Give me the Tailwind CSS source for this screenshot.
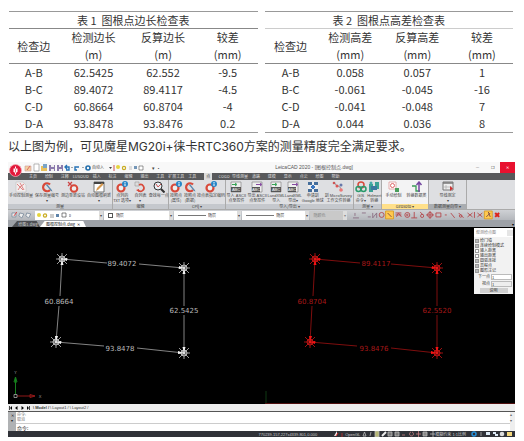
<!DOCTYPE html>
<html lang="zh-CN">
<head>
<meta charset="utf-8">
<meta name="viewport" content="width=device-width, initial-scale=1">
<title>测量精度检查</title>
<script src="https://cdn.jsdelivr.net/npm/@tailwindcss/browser@4"></script>
</head>
<body class="bg-white text-[#333] font-['Noto_Sans_CJK_SC',sans-serif]">
<svg class="hidden" aria-hidden="true">
  <symbol id="ring" viewBox="0 0 12 12"><circle cx="6" cy="7" r="3.5" fill="#eee" stroke="#d8493a" stroke-width="2.2"/></symbol>
  <symbol id="survey" viewBox="0 0 12 12"><path d="M1 1h7l3 3v7H1z" fill="#f2eeee" stroke="#bbb" stroke-width=".5"/><path d="M2 3l3 3-2 3M5 2l4 7M9 3L5 6l3 3" fill="none" stroke="#d77" stroke-width=".9"/></symbol>
  <symbol id="ringpen" viewBox="0 0 12 12"><path d="M9 3.5A4 4 0 1 0 9 9" fill="none" stroke="#d8493a" stroke-width="2.2"/><path d="M5 4l5 6 1.500.500-.7-1.600L6 3z" fill="#5687ad"/></symbol>
  <symbol id="ringx" viewBox="0 0 12 12"><circle cx="7" cy="7.500" r="3.300" fill="#eee" stroke="#d8493a" stroke-width="2"/><path d="M1 1l4 4M5 1L1 5" stroke="#c44" stroke-width="1.200"/></symbol>
  <symbol id="ringinfo" viewBox="0 0 12 12"><circle cx="5" cy="7" r="3.500" fill="#eee" stroke="#d8493a" stroke-width="2.200"/><circle cx="9" cy="3" r="3" fill="#2786c8"/><path d="M9 1v1M9 2.500v2.500" stroke="#fff"/></symbol>
  <symbol id="page" viewBox="0 0 12 12"><path d="M1 1h10v10H1z" fill="#fff" stroke="#555" stroke-width=".8"/><path d="M1 1h10v2H1z" fill="#444"/><path d="M3 10l1-3 5-5 1.500 1.500-5 5z" fill="#d79a50"/></symbol>
  <symbol id="zoomi" viewBox="0 0 12 12"><circle cx="5" cy="5" r="4" fill="#e9f1f5" stroke="#333"/><path d="M8 8l3.500 3.500" stroke="#333" stroke-width="2"/><path d="M3 3l2 3 3-3" fill="none" stroke="#c55"/></symbol>
  <symbol id="cycle" viewBox="0 0 12 12"><path d="M1 1h4v4H1z" fill="#ddd" stroke="#999" stroke-width=".6"/><path d="M5 4a3.300 3.300 0 1 1-1 5" fill="none" stroke="#d8493a" stroke-width="1.700"/><path d="M2 9l3-1v3z" fill="#d8493a"/></symbol>
  <symbol id="abcg" viewBox="0 0 12 12"><path d="M1 1h10v10H1z" fill="#eee" stroke="#777" stroke-width=".6"/><path d="M1 6h10v5H1z" fill="#555"/><path d="M2 3.500h4M5 2l2 1.500L5 5" stroke="#36a455" fill="none"/><text x="6" y="10" text-anchor="middle" font-size="4" fill="#fff" font-family="Liberation Sans">ABC</text></symbol>
  <symbol id="abcp" viewBox="0 0 12 12"><path d="M1 1h10v10H1z" fill="#eee" stroke="#777" stroke-width=".6"/><path d="M1 6h8v5H1z" fill="#555"/><path d="M5 3.500h5M9 2l2 1.500L9 5" stroke="#8549a0" fill="none"/><text x="5" y="10" text-anchor="middle" font-size="4" fill="#fff" font-family="Liberation Sans">ABC</text></symbol>
  <symbol id="earth" viewBox="0 0 12 12"><path d="M1 1h10v10H1z" fill="#eee"/><path d="M1 1h4v3H1zM7 1h4v3H7zM1 8h4v3H1zM7 8h4v3H7z" fill="#456d9b"/><path d="M4 6h4M6 4v4" stroke="#3975c0" stroke-width="2"/></symbol>
  <symbol id="dots" viewBox="0 0 12 12"><path d="M2 1l2 3 4 2 2 4" fill="none" stroke="#999"/><circle cx="2" cy="2" r="1.300" fill="#c55"/><circle cx="5" cy="5" r="1.500" fill="#d55"/><circle cx="9" cy="4" r="1.500" fill="#67a"/><circle cx="9" cy="9" r="1.800" fill="#e77"/></symbol>
  <symbol id="gis" viewBox="0 0 12 12"><circle cx="6" cy="4" r="3" fill="none" stroke="#d8493a" stroke-width="1.500"/><circle cx="3.500" cy="8" r="2.500" fill="none" stroke="#2a9a6b" stroke-width="1.500"/><circle cx="8.500" cy="8" r="2.500" fill="none" stroke="#2a9a6b" stroke-width="1.500"/></symbol>
  <symbol id="net" viewBox="0 0 12 12"><path d="M1 3h4v8H1zM7 1h4v7H7z" fill="#3ba195"/><path d="M3 5h6v4H3z" fill="#3c78a0"/><circle cx="3" cy="2" r="1.500" fill="#4aa"/></symbol>
  <symbol id="geo" viewBox="0 0 12 12"><path d="M1 1h7v7H1z" fill="#fff" stroke="#d99" stroke-width=".8"/><circle cx="4.500" cy="4.500" r="2" fill="none" stroke="#d66"/><path d="M7 7h4v4H7z" fill="#4a9e5c"/></symbol>
  <symbol id="updown" viewBox="0 0 12 12"><path d="M1 5h4v5h4" fill="none" stroke="#3a9b55" stroke-width="1.300"/><path d="M8 11V2M5.500 4L8 1l2.500 3" fill="none" stroke="#7548a0" stroke-width="1.500"/></symbol>
  <symbol id="tab" viewBox="0 0 12 12"><path d="M1 1h10v8H1z" fill="#eee" stroke="#777"/><path d="M1 2h10" stroke="#777" stroke-width="1.500"/><path d="M4 4v5M1 6h10" stroke="#aaa" stroke-width=".7"/><path d="M8 5l3 2.500L8 10z" fill="#c33"/></symbol>
  <symbol id="star" viewBox="-7 -7 14 14"><path d="M-5-5L5 5M5-5L-5 5M0-6V6M-6 0H6" stroke="currentColor" stroke-width=".7"/><circle r="3" fill="none" stroke="currentColor" stroke-width=".8"/><circle r="1.400" fill="currentColor"/></symbol>
</svg>

<main class="flex flex-col pl-2 pr-2">
  <section class="grid grid-cols-2 gap-x-[7px] pt-[11px] pl-px pr-[3px] text-[11px] leading-[17px] text-[#333] text-center">
    <table class="w-full table-fixed border-collapse border-b border-[#999]">
      <caption class="border-t border-[#999] leading-4">表 1&nbsp; 图根点边长检查表</caption>
      <colgroup><col class="w-[20%]"><col class="w-[28%]"><col class="w-[28%]"><col class="w-[24%]"></colgroup>
      <thead class="border-y border-[#888]"><tr>
        <th class="font-normal">检查边</th><th class="font-normal">检测边长<br>(m)</th><th class="font-normal">反算边长<br>(m)</th><th class="font-normal">较差<br>(mm)</th></tr></thead>
      <tbody>
        <tr><td>A-B</td><td>62.5425</td><td>62.552</td><td>-9.5</td></tr>
        <tr><td>B-C</td><td>89.4072</td><td>89.4117</td><td>-4.5</td></tr>
        <tr><td>C-D</td><td>60.8664</td><td>60.8704</td><td>-4</td></tr>
        <tr><td>D-A</td><td>93.8478</td><td>93.8476</td><td>0.2</td></tr>
      </tbody>
    </table>
    <table class="w-full table-fixed border-collapse border-b border-[#999]">
      <caption class="border-t border-[#999] leading-4">表 2&nbsp; 图根点高差检查表</caption>
      <colgroup><col class="w-[21%]"><col class="w-[27%]"><col class="w-[27%]"><col class="w-[25%]"></colgroup>
      <thead class="border-t border-b border-t-[#ccc] border-b-[#888]"><tr>
        <th class="font-normal">检查边</th><th class="font-normal">检测高差<br>(mm)</th><th class="font-normal">反算高差<br>(mm)</th><th class="font-normal">较差<br>(mm)</th></tr></thead>
      <tbody>
        <tr><td>A-B</td><td>0.058</td><td>0.057</td><td>1</td></tr>
        <tr><td>B-C</td><td>-0.061</td><td>-0.045</td><td>-16</td></tr>
        <tr><td>C-D</td><td>-0.041</td><td>-0.048</td><td>7</td></tr>
        <tr><td>D-A</td><td>0.044</td><td>0.036</td><td>8</td></tr>
      </tbody>
    </table>
  </section>

  <p class="pt-[5px] pb-[6px] text-[12px] leading-[18px] text-[#333] font-['Inter','Noto_Sans_CJK_SC',sans-serif]">以上图为例，可见魔星MG20i+徕卡RTC360方案的测量精度完全满足要求。</p>

  <section class="relative mr-px flex flex-col bg-[#c4c7cc] text-[4px] leading-[5px] text-[#444]">
    <button aria-label="应用菜单" class="absolute left-px top-[2px] z-10 size-[13px]">
      <svg viewBox="0 0 13 13" class="size-full"><circle cx="6.500" cy="6.500" r="6" fill="#e2193b" stroke="#f4a5ae" stroke-width=".8"/><path d="M6.500 2.500v8" stroke="#fff" stroke-width="1"/><path d="M4.500 4.500h4v3l-2 2-2-2z" fill="#fff"/><path d="M6.500 4.500v4" stroke="#e2193b" stroke-width=".6"/></svg>
    </button>
    <header class="flex h-[11px] items-center bg-[#f8f8f8] pl-4">
      <svg viewBox="0 0 68 10" class="h-[10px] w-[68px] shrink-0" aria-hidden="true">
        <path d="M1 3h6v5H1z" fill="#f3d2a0" stroke="#c99" stroke-width=".6"/><path d="M3 7l3-4" stroke="#d66"/>
        <path d="M10 1h5v7h-5z" fill="#fff" stroke="#999" stroke-width=".7"/>
        <path d="M17 3h6v5h-6z" fill="#e9c15c"/><path d="M19 1h4v4h-4z" fill="#79a4c7"/>
        <path d="M25 2h6v6h-6zM33 2h6v6h-6z" fill="#8b7aac"/><path d="M27 2h3v2h-3zM35 2h2v2h-2zM27 6h3v2h-3zM35 6h3v2h-3z" fill="#eee"/>
        <path d="M42 7h3V4h-4m2-2-2 2 2 2M53 7h-2V4h4" fill="none" stroke="#2672b5" stroke-width="1.400"/>
        <path d="M47 4h2l-1 1zM58 4h2l-1 1z" fill="#555"/>
        <circle cx="64" cy="5" r="2" fill="none" stroke="#246fac" stroke-width="1.600"/>
      </svg>
      <span class="w-4 shrink-0 whitespace-nowrap">自动入</span>
      <svg viewBox="0 0 36 10" class="h-[10px] w-9 shrink-0" aria-hidden="true"><path d="M1 4h3l-1.500 2z" fill="#444"/><path d="M6 2v6" stroke="#c55"/><circle cx="10" cy="4" r="2" fill="#e5d53c"/><circle cx="16" cy="5" r="1.600" fill="none" stroke="#c9ac22" stroke-width="1.200"/><path d="M21 3h3v4h-3z" fill="#ddd"/><path d="M26 3h3v3h-3z" fill="#7496b7"/><path d="M31 3h4v4h-4z" fill="#fff" stroke="#555" stroke-width=".6"/></svg>
      <span class="ml-2 whitespace-nowrap text-[5px]">▾ ·</span>
      <h1 class="ml-auto mr-[117px] whitespace-nowrap text-[5px] text-[#555] font-['Liberation_Sans','Noto_Sans_CJK_SC',sans-serif]">LeicaCAD 2020 - [图根控制点.dwg]</h1>
      <div class="flex h-full items-stretch">
        <button class="w-[15px]" aria-label="最小化">—</button><button class="w-[15px]" aria-label="还原">❐</button><button class="w-[15px] bg-[#e8112f] text-white" aria-label="关闭">✕</button>
      </div>
    </header>

    <nav class="flex h-[7px] items-center bg-[#58595b] pl-[17px] text-[#ddd]">
      <div class="grid w-[65%] grid-cols-20 items-center text-center whitespace-nowrap">
        <a href="#">主页</a><a href="#">绘制</a><a href="#">注释</a><a href="#">LUSOUD</a><a href="#">插入</a><a href="#">标注</a><a href="#">编辑</a><a href="#">输出</a><a href="#">工具</a><a href="#">扩展工具</a><a href="#">工具</a><a href="#" class="mx-1 bg-[#ddd] leading-[7px] text-[#333]">点</a><a href="#">COGO</a><a href="#">导线测量</a><a href="#">道路</a><a href="#">建模</a><a href="#">显示</a><a href="#">点云</a><a href="#">绘图</a><a href="#">帮助</a>
      </div>
    </nav>

    <div class="grid h-[29px] grid-cols-[105fr_56fr_57fr_128fr_28fr_47fr_38fr_48fr] bg-[#dedfe2] text-center whitespace-nowrap">
      <div class="flex flex-col justify-between border-r border-[#aaa]">
        <div class="grid grid-cols-4 pt-px">
          <button class="flex flex-col items-center"><svg class="size-3"><use href="#survey"/></svg>手动控制测量</button>
          <button class="flex flex-col items-center"><svg class="size-3"><use href="#ringpen"/></svg>保存测量编号<br>▾</button>
          <button class="flex flex-col items-center"><svg class="size-3"><use href="#ringx"/></svg>测边重新设站</button>
          <button class="flex flex-col items-center"><svg class="size-3"><use href="#page"/></svg>自动图根刷新<br>▾</button>
        </div>
        <span class="bg-[#c5c8cd]">测量</span>
      </div>
      <div class="flex flex-col justify-between border-r border-[#aaa]">
        <div class="grid grid-cols-3 pt-px">
          <button class="flex flex-col items-center"><svg class="size-3"><use href="#ringinfo"/></svg>点列的<br>TXT 选项▾</button>
          <button class="flex flex-col items-center"><svg class="size-3"><use href="#cycle"/></svg>自列表<br>▾</button>
          <button class="flex flex-col items-center"><svg class="size-3"><use href="#zoomi"/></svg>查找每一点</button>
        </div>
        <span class="bg-[#c5c8cd]">编辑</span>
      </div>
      <div class="flex flex-col justify-between border-r border-[#aaa]">
        <div class="grid grid-cols-[1fr_1fr_2fr] pt-px">
          <button class="flex flex-col items-center"><svg class="size-3"><use href="#ringinfo"/></svg>按照点<br>(属性)</button>
          <button class="flex flex-col items-center"><svg class="size-3"><use href="#ringpen"/></svg>按照点<br>(数据)</button>
          <button class="flex flex-col items-center"><svg class="size-3"><use href="#ringinfo"/></svg>按点表指定编码</button>
        </div>
        <span class="bg-[#c5c8cd]">CPij ▾</span>
      </div>
      <div class="flex flex-col justify-between border-r border-[#aaa]">
        <div class="grid grid-cols-[5fr_5fr_4fr_4fr_5fr_7fr] pt-px font-['Liberation_Sans','Noto_Sans_CJK_SC',sans-serif]">
          <button class="flex flex-col items-center"><svg class="size-3"><use href="#abcg"/></svg>导入 ASCII<br>点至控件</button>
          <button class="flex flex-col items-center"><svg class="size-3"><use href="#abcp"/></svg>导出 ASCII<br>点至控件</button>
          <button class="flex flex-col items-center"><svg class="size-3"><use href="#abcg"/></svg>LandXML<br>导入</button>
          <button class="flex flex-col items-center"><svg class="size-3"><use href="#abcp"/></svg>LandXML<br>导出▾</button>
          <button class="flex flex-col items-center"><svg class="size-3"><use href="#earth"/></svg>申请到<br>Google 地球</button>
          <button class="flex flex-col items-center"><svg class="size-3"><use href="#dots"/></svg>到 MicroSurvey<br>工作文件转换</button>
        </div>
        <span class="bg-[#c5c8cd]">导入/导出 ▾</span>
      </div>
      <div class="flex flex-col justify-between border-r border-[#aaa]">
        <div class="grid grid-cols-2 pt-px font-['Liberation_Sans','Noto_Sans_CJK_SC',sans-serif]">
          <button class="flex flex-col items-center"><svg class="size-3"><use href="#gis"/></svg>GIS<br>命令▾</button>
          <button class="flex flex-col items-center"><svg class="size-3"><use href="#net"/></svg>Helmert<br>转换</button>
        </div>
        <span class="bg-[#c5c8cd]">测量 ▾</span>
      </div>
      <div class="flex flex-col justify-between border-r border-[#aaa] bg-[#f3f3f4]">
        <div class="grid grid-cols-2 pt-px">
          <button class="flex flex-col items-center"><svg class="size-3"><use href="#geo"/></svg>手动绘制</button>
          <button class="flex flex-col items-center"><svg class="size-3"><use href="#updown"/></svg>转换数据类</button>
        </div>
        <span class="bg-[#ffe08a]">Geosoto ▾</span>
      </div>
      <div class="flex flex-col justify-between border-r border-[#aaa]">
        <button class="flex flex-col items-center pt-px"><svg class="size-3"><use href="#tab"/></svg>导线测定<br>▾</button>
        <span class="bg-[#aaadb1]">数据测量向导 ▾</span>
      </div>
    </div>

    <div class="grid h-[11px] grid-cols-[26fr_69fr_70fr_68fr_68fr_37fr_169fr] items-center gap-x-px border-t border-[#aaa] bg-gradient-to-b from-[#cfd1d5] to-[#b4b7bc]">
      <svg viewBox="0 0 26 10" class="w-full" aria-hidden="true"><path d="M4 3h4v4H4zM12 3l4 1-2 4-3-2zM19 3l4 1-2 4-3-2z" fill="#eee" stroke="#789" stroke-width=".8"/><path d="M6 6l3-4" stroke="#d44"/></svg>
      <label class="relative flex h-[9px] items-center bg-white">
        <svg viewBox="0 0 34 9" class="absolute left-0 h-[9px]" aria-hidden="true"><circle cx="4" cy="4" r="2" fill="#e5d53c"/><circle cx="10" cy="4.500" r="1.600" fill="none" stroke="#c9ac22" stroke-width="1.300"/><path d="M15 3h4v4h-4z" fill="#ccc"/><path d="M21 3h3v3h-3z" fill="#5d83aa"/><path d="M27 2h4v4h-4z" fill="#fff" stroke="#333" stroke-width=".6"/></svg>
        <select aria-label="图层" class="h-full w-full appearance-none pl-[34px]"><option>0</option></select><span class="pointer-events-none absolute right-0 bg-[#ddd] px-px leading-[9px]">▾</span>
      </label>
      <label class="relative flex h-[9px] items-center bg-white"><span class="absolute left-1 size-[5px] border border-[#555]"></span>
        <select aria-label="颜色" class="h-full w-full appearance-none pl-3"><option>随层</option></select><span class="pointer-events-none absolute right-0 bg-[#ddd] px-px leading-[9px]">▾</span>
      </label>
      <label class="relative flex h-[9px] items-center bg-white"><span class="absolute left-1 h-px w-[28px] bg-[#777]"></span>
        <select aria-label="线型" class="h-full w-full appearance-none pl-[34px]"><option>随层</option></select><span class="pointer-events-none absolute right-0 bg-[#ddd] px-px leading-[9px]">▾</span>
      </label>
      <label class="relative flex h-[9px] items-center bg-white"><span class="absolute left-1 h-px w-[28px] bg-[#777]"></span>
        <select aria-label="线宽" class="h-full w-full appearance-none pl-[34px]"><option>随层</option></select><span class="pointer-events-none absolute right-0 bg-[#ddd] px-px leading-[9px]">▾</span>
      </label>
      <label class="relative flex h-[9px] items-center bg-[#c9c9c9] text-[#888]">
        <select aria-label="打印样式" disabled class="h-full w-full appearance-none pl-[3px]"><option>随颜色</option></select><span class="pointer-events-none absolute right-0 bg-[#ddd] px-px leading-[9px]">▾</span>
      </label>
      <svg viewBox="0 0 169 10" class="w-full" aria-hidden="true" fill="none" stroke="#b5474c" stroke-width=".9">
        <path d="M5 8h6M7 3v3M14 3h4M20 7h3M25 3v5l4-5v5" stroke="#8b6d83"/><circle cx="34" cy="5" r="2.500"/><path d="M38 1h8v8h-8z" fill="#ffc94f" stroke="#d89c25"/><path d="M40 3l4 4" stroke="#744"/><path d="M48 3h6M49 7l2-4 3 4M48 5h6"/><circle cx="60" cy="5" r="2.500"/><circle cx="60" cy="5" r=".8"/><path d="M64 8h6M67 2v6M73 2l3 3"/><circle cx="75" cy="6" r="1.600"/><circle cx="83" cy="5" r="2.500"/><path d="M83 1v8M79 5h8M89 3h5v4h-5z"/><path d="M98 5h2"/><path d="M104 3l4 5M112 3l5 5" /><circle cx="114" cy="6" r="1.300"/><path d="M121 3l5 4M121 7l5-4M128 2v6M131 3l5 4M131 7l5-4"/><path d="M138 1h8v8h-8z" fill="#ffc94f" stroke="#d89c25"/><path d="M140 7l4-4m0 4-2-5" stroke="#744"/><path d="M149 3l4 4m0-4-4 4" stroke="#dc231b" stroke-width="2"/>
      </svg>
    </div>

    <div class="flex h-[7px] items-end bg-[#9da1a7] pl-1">
      <button class="h-[6px] w-7 bg-[#4d4f53] pl-1 text-[#ccc] [clip-path:polygon(18%_0,88%_0,100%_100%,0_100%)]">绘图1.dwg</button>
      <button class="h-[6px] w-[46px] whitespace-nowrap bg-white text-[#222] [clip-path:polygon(10%_0,94%_0,100%_100%,0_100%)]">图根控制点.dwg &nbsp;✕</button>
      <span class="ml-auto pr-px text-black">▾</span>
    </div>

    <div class="relative bg-black">
      <svg viewBox="0 0 507 177" class="block w-full font-['DejaVu_Sans',sans-serif]" font-size="7" text-anchor="middle" role="img" aria-label="检测与反算四边形">
        <g stroke-width=".7" stroke="#bbb"><path d="M54 32L99 36M131 37L176 41M176 41V79M176 88V126M48 115L96 119M129 121L176 126M54 32L52 69M51 79L48 115" fill="none"/></g>
        <g fill="#fff"><path d="M54 32l5-1v3zM176 41l-5-2v3zM54 32l-1.500 6h3zM176 41l-1.500 6h3zM176 126l-1.500-6h3zM176 126l-6-2v3zM48 115l5-1v3zM48 115l-1-6h3z"/></g>
        <g color="#ddd"><use href="#star" x="47" y="25" width="14" height="14"/><use href="#star" x="169" y="34" width="14" height="14"/><use href="#star" x="169" y="119" width="14" height="14"/><use href="#star" x="41" y="108" width="14" height="14"/></g>
        <g fill="#bbb"><text x="114" y="39">89.4072</text><text x="51" y="77">60.8664</text><text x="176" y="86">62.5425</text><text x="112" y="124">93.8478</text></g>
        <g stroke-width=".7" stroke="#b51414"><path d="M307 32L352 36M383 37L429 41M429 41V79M429 88V126M302 115L349 119M383 121L429 126M307 32L305 69M304 79L302 115" fill="none"/></g>
        <g fill="#f11"><path d="M307 32l5-1v3zM429 41l-5-2v3zM307 32l-1.500 6h3zM429 41l-1.500 6h3zM429 126l-1.500-6h3zM429 126l-6-2v3zM302 115l5-1v3zM302 115l-1-6h3z"/></g>
        <g color="#e01818"><use href="#star" x="300" y="25" width="14" height="14"/><use href="#star" x="422" y="34" width="14" height="14"/><use href="#star" x="422" y="119" width="14" height="14"/><use href="#star" x="295" y="108" width="14" height="14"/></g>
        <g fill="#a81818"><text x="368" y="39">89.4117</text><text x="304" y="77">60.8704</text><text x="429" y="86">62.5520</text><text x="366" y="124">93.8476</text></g>
        <path d="M7.500 167V151M6 155l1.500-5 1.500 5z" stroke="#16801d" fill="none"/><path d="M9 169h18M22 167.500l5 1.500-5 1.500z" stroke="#901919" fill="none"/><path d="M6 167.500h3v3H6z" stroke="#bbb" stroke-width=".7" fill="none"/>
        <g fill="#999" font-size="4"><text x="7.500" y="147">Y</text><text x="32" y="171">X</text></g>
        <path d="M258 176V164" stroke="#15501a" stroke-width=".7"/><path d="M257 176.500H507" stroke="#741717" stroke-width=".7"/>
      </svg>
      <form class="absolute right-[2px] top-px flex w-[39px] flex-col bg-[#f2f2f2] pb-px text-[#333]">
        <div class="flex h-[9px] items-center bg-white pl-[2px] text-[#888]">观测绘点图<span class="ml-auto h-[6px] w-[6px] bg-[#e5e5e5]"></span></div>
        <div class="flex flex-col pl-px pt-px *:flex *:items-center *:gap-px">
          <label><input type="checkbox" checked class="size-1 appearance-none border border-[#999] bg-white checked:bg-[#bbb]">绘门墙</label>
          <label><input type="checkbox" checked class="size-1 appearance-none border border-[#999] bg-white checked:bg-[#bbb]">连续绘制模式</label>
          <label><input type="checkbox" class="size-1 appearance-none border border-[#999] bg-white">输入距离</label>
          <label><input type="checkbox" class="size-1 appearance-none border border-[#999] bg-white">输出距离</label>
          <label><input type="checkbox" checked class="size-1 appearance-none border border-[#999] bg-white checked:bg-[#bbb]">圆弧连接</label>
          <label><input type="checkbox" checked class="size-1 appearance-none border border-[#999] bg-white checked:bg-[#bbb]">高程点</label>
          <label><input type="checkbox" checked class="size-1 appearance-none border border-[#999] bg-white checked:bg-[#bbb]">图形注记</label>
        </div>
        <label class="flex h-[7px] items-center justify-end gap-px pr-px">下一点<input value="1" class="h-[6px] w-[21px] border border-[#bbb] bg-white"></label>
        <label class="flex h-[7px] items-center justify-end gap-px pr-px">视点<input value="1" class="h-[6px] w-[21px] border border-[#bbb] bg-[#eee]"></label>
        <button type="button" class="mx-auto mt-px h-[5px] w-7 bg-[#d0d0d0]">说明</button>
      </form>
    </div>

    <div class="flex h-[7px] items-center gap-[3px] bg-[#eee] pl-px text-[#333]">
      <button aria-label="首个"><svg viewBox="0 0 3 4" class="h-1 w-[3px]"><path d="M0 0h.7v4H0zM3 0v4L1 2z"/></svg></button><button aria-label="上一个"><svg viewBox="0 0 3 4" class="h-1 w-[3px]"><path d="M2.500 0v4L0 2z"/></svg></button><button aria-label="下一个"><svg viewBox="0 0 3 4" class="h-1 w-[3px]"><path d="M.5 0v4L3 2z"/></svg></button><button aria-label="末个"><svg viewBox="0 0 3 4" class="h-1 w-[3px]"><path d="M2.300 0H3v4h-.7zM0 0v4l2-2z"/></svg></button>
      <div class="flex gap-px font-['Liberation_Sans',sans-serif] text-[4px]"><button class="font-bold">\ Model /</button><button>\ Layout1 /</button><button>\ Layout2 /</button></div>
    </div>
    <div class="flex h-5 border-t border-[#555] bg-white text-[5px]">
      <div class="flex w-2 flex-col items-center justify-start bg-[#b0b2b4] pt-px text-[4px] text-[#222]"><span>✕</span><span>▾</span></div>
      <div class="flex flex-1 flex-col">
        <div class="flex-1 border-b border-[#ccc] pl-px text-[4px] text-[#777]">命令:<br>取消</div>
        <label class="flex h-[7px] items-center pl-px text-[#222]">命令:<input aria-label="命令" class="min-w-0 flex-1 outline-none"></label>
      </div>
      <div class="flex w-[5px] flex-col justify-between bg-[#eee] pb-2 text-[4px] leading-[5px] text-[#666]"><span>▴</span><span>▾</span></div>
    </div>
    <footer class="flex h-[6px] items-center bg-[#303238] text-[#ccc] font-['Liberation_Sans','Noto_Sans_CJK_SC',sans-serif]">
      <span class="ml-auto mr-4 whitespace-nowrap">770239.157,227x4339.801,0.000</span>
      <svg viewBox="0 0 12 6" class="w-3 shrink-0" aria-hidden="true"><path d="M1 5l3-5v5z" fill="#eee"/><path d="M3 5l2-3" stroke="#d22"/><path d="M9 2v4" stroke="#a33"/></svg>
      <span class="whitespace-nowrap">OpenGL</span>
      <svg viewBox="0 0 74 6" class="ml-px w-[74px] shrink-0" aria-hidden="true" fill="none" stroke="#bbb" stroke-width=".8"><path d="M2 5l1.500-4L5 5zM9 5l1-4"/><path d="M14 0h4v6h-4z" fill="#b7b875"/><path d="M21 5l4-4" stroke="#eee" stroke-width="2"/><path d="M27 1h4v4h-4zM34 1h4v4h-4z" fill="#777"/><path d="M41 4h3M50 1a2 2 0 1 0 1 0M55 3h5M57.500 0v6" stroke="#c87d82"/><path d="M62 1h4v4h-4z" fill="#888"/><path d="M69 3h5M72 0v6"/></svg>
      <span class="whitespace-nowrap">模糊约束 1:1比例</span>
      <svg viewBox="0 0 44 6" class="ml-1 mr-px w-11 shrink-0" aria-hidden="true"><circle cx="4" cy="3" r="2" fill="none" stroke="#258ed8" stroke-width="1.500"/><path d="M11 1v4" stroke="#999"/><path d="M16 1h4v3h-4zM23 1h3v2h-3zM25 3h3v2h-3z" fill="#ddeaf5"/><circle cx="32" cy="3" r="2.300" fill="#ddd"/><path d="M37 1h5v4h-5z" fill="#f4d87d"/></svg>
    </footer>
  </section>
</main>
</body>
</html>
